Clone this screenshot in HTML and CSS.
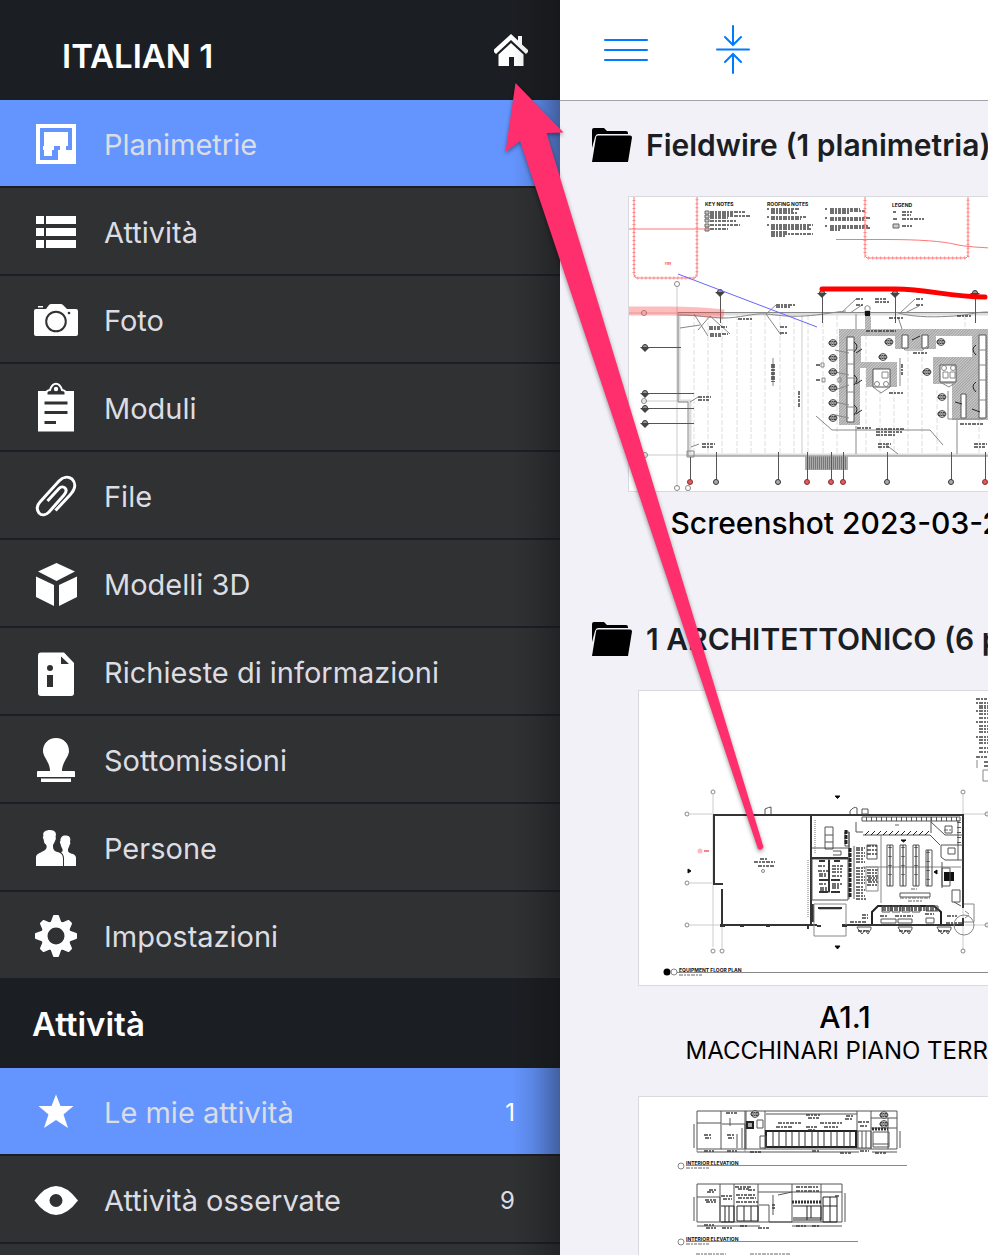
FILE: index.html
```html
<!DOCTYPE html>
<html lang="it">
<head>
  <meta charset="UTF-8" />
  <meta name="viewport" content="width=device-width, initial-scale=1.0"/>
  <title>Planimetrie</title>
  <link rel="stylesheet" href="styles.css">
</head>
<body>
  <div class="app">
    <aside class="sidebar">
      <header class="project">
        <h1>ITALIAN 1</h1>
        <button class="icon-btn" type="button" aria-label="Home">
          <svg class="home" viewBox="0 0 36 36">
            <path d="M1 17.500 18 2l7 6.500V4h4v8.500l6 5.500v2l-2 2L18 8 3 22l-2-2z" fill="#fff"/>
            <path d="M5.500 22.500 18 11l12.500 11.500V34H21v-9h-5v9H5.500z" fill="#fff"/>
          </svg>
        </button>
      </header>

      <nav>
        <a class="row active" href="#">
          <svg class="icon" viewBox="0 0 48 48">
            <path fill-rule="evenodd" d="M4 5h40v40H4zM8 9v32h18V31h2v-4h-6v4h-2v6h-8v-6h-1v-4h1V13h24v14h-2v4h6V9z"/>
          </svg>
          <span class="label">Planimetrie</span>
        </a>
        <a class="row" href="#">
          <svg class="icon" viewBox="0 0 48 48">
            <path d="M4 9h8v8H4zM14 9h30v8H14zM4 21h8v8H4zM14 21h30v8H14zM4 33h8v8H4zM14 33h30v8H14z"/>
          </svg>
          <span class="label">Attività</span>
        </a>
        <a class="row" href="#">
          <svg class="icon" viewBox="0 0 48 48">
            <path d="M6 11h5v1.500H6zM4 14h10l3-4q1-1 2-1h10q1 0 2 1l4 4h9q2 0 2 2v23q0 2-2 2H4q-2 0-2-2V16q0-2 2-2z"/>
            <circle class="cut-line" cx="24" cy="26.500" r="9.800"/>
            <circle class="cut" cx="37" cy="18" r="1.300"/>
          </svg>
          <span class="label">Foto</span>
        </a>
        <a class="row" href="#">
          <svg class="icon" viewBox="0 0 48 48">
            <path d="M6 8h36v40.500H6z"/>
            <path class="cut clip" d="M14.500 12.500v-3q0-2 3.500-2.500Q20 .8 24 .8T30 7q3.500.5 3.500 2.500v3z"/>
            <circle cx="24" cy="6" r="2.200"/>
            <path class="cut" d="M12.500 18.500h23v3h-23zM12.500 28h23v3h-23zM12.500 38H24v3H12.500z"/>
          </svg>
          <span class="label">Moduli</span>
        </a>
        <a class="row" href="#">
          <svg class="icon" viewBox="0 0 48 48">
            <path class="line" d="M23.500 39.500 38 24c7-7.500 5-13 2-16-4-3-9-2-13 2L8 31c-4 4-3 8-1 11 3 3 7 2 10-1l15-17c3-3.500 2-6 1-7-1.500-1.500-4-1.500-6 .5L15.500 30"/>
          </svg>
          <span class="label">File</span>
        </a>
        <a class="row" href="#">
          <svg class="icon" viewBox="0 0 48 48">
            <path d="M24.500 4 43 12.500 24.500 22 6 12.500zM4 17.500 22 26v21L4 38zM45 17.500 27 26v21l18-9z"/>
          </svg>
          <span class="label">Modelli 3D</span>
        </a>
        <a class="row" href="#">
          <svg class="icon" viewBox="0 0 48 48">
            <path d="M9 5.500h23L42 16v30q0 3-3 3H9q-3 0-3-3V8.500q0-3 3-3z"/>
            <path class="cut" d="M29 9.500V17h8zM15 28h6v12h-6z"/>
            <circle class="cut" cx="18" cy="21" r="3"/>
          </svg>
          <span class="label">Richieste di informazioni</span>
        </a>
        <a class="row" href="#">
          <svg class="icon" viewBox="0 0 48 48">
            <path d="M24 3c8 0 13 6 13 13 0 6-7 11-7 20h12q1 0 1 1v5H5v-5q0-1 1-1h12c0-9-7-14-7-20C11 9 16 3 24 3zM9 43.500h30V47H9z"/>
          </svg>
          <span class="label">Sottomissioni</span>
        </a>
        <a class="row" href="#">
          <svg class="icon" viewBox="0 0 48 48">
            <path d="M4 43V34c0-4 8-5 10-8 1-2 1-3-.5-5-1.500-1-1-1-2-5-1-1-.5-3 0-3C10 9 14 7 18 7c5 0 7 3 5.500 7 1 1 0 3-.5 4-1 3-2 3-2 5 0 6 3 5 7 7 2 1 3 3 3 6v7z"/>
            <path d="M32 43v-8c0-3-2-5-3-6 2 0 2-2 1-4-1-1-1-3-1.500-4-1-2-.5-3 0-3C28 14 31 12 34 12.500c4 0 5 3 4 6.500.5 1 .5 2-.5 3-.5 3-1.500 3-1.500 5 0 3 2 3 5 4 2 1 3 2 3 4v8z"/>
          </svg>
          <span class="label">Persone</span>
        </a>
        <a class="row" href="#">
          <svg class="icon" viewBox="0 0 48 48">
            <path d="M22 5h4l2.500 7h-9zM22 45h4l2.500-7h-9zM4 23v4l7 2.500v-9zM44 23v4l-7 2.500v-9z" class="tooth"/>
            <path d="M9 12.500 11.500 10l7 3-6.500 6.500zM39 12.500 36.500 10l-7 3 6.500 6.500zM9 37.500l2.500 2.500 7-3-6.500-6.500zM39 37.500 36.500 40l-7-3 6.500-6.500z" class="tooth"/>
            <circle cx="24" cy="25" r="15"/>
            <circle class="cut" cx="24" cy="25" r="8.500"/>
          </svg>
          <span class="label">Impostazioni</span>
        </a>
      </nav>

      <h2 class="group">Attività</h2>

      <nav>
        <a class="row active" href="#">
          <svg class="icon" viewBox="0 0 48 48">
            <path d="M24 7.500 28.500 19h13L31.500 27.500 36 41l-12-8-12 8 4.500-13.500L6.500 19h13z"/>
          </svg>
          <span class="label">Le mie attività</span>
          <span class="count">1</span>
        </a>
        <a class="row" href="#">
          <svg class="icon" viewBox="0 0 48 48">
            <path d="M2.500 25.500Q13 11 24 11t22 14.500Q35 40 24 40T2.500 25.500z"/>
            <circle class="cut" cx="24" cy="25.500" r="6.500"/>
          </svg>
          <span class="label">Attività osservate</span>
          <span class="count">9</span>
        </a>
      </nav>
    </aside>

    <main class="content">
      <div class="toolbar">
        <button class="icon-btn" type="button" aria-label="Menu">
          <svg class="tool" viewBox="0 0 50 50"><path d="M4 15h42M4 25h42M4 35h42"/></svg>
        </button>
        <button class="icon-btn" type="button" aria-label="Comprimi">
          <svg class="tool" viewBox="0 0 50 50"><path d="M9 24.500h32M25 1v19M17 12l8 8 8-8M25 48V29M17 37l8-8 8 8"/></svg>
        </button>
      </div>

      <section>
        <h2 class="folder">
          <svg class="folder-icon" viewBox="0 0 40 34">
            <path d="M0 20V2q0-2 2-2h10l3 3h19q2 0 2 2v1H6q-2 0-3 3z"/>
            <path d="M6 7.500h32q2 0 2 2L36 34H0L4 9.500q0-2 2-2z"/>
          </svg>
          Fieldwire (1 planimetria)
        </h2>
        <div class="sheets">
          <a class="sheet" href="#">
            <svg class="thumb wide" viewBox="628 196 434 296">
              <defs>
                <pattern id="hatch" width="2" height="2" patternUnits="userSpaceOnUse" patternTransform="rotate(45)">
                  <rect width="2" height="2" fill="#ccc"/><path d="M0 0v2" stroke="#777"/>
                </pattern>
                <g id="tag"><circle r="2.500" fill="#999" stroke="#333"/><path d="M-5 0H5L0 5z" fill="#444"/></g>
                <g id="bubble"><circle r="3.500" fill="#ccc" stroke="#555"/><path d="M-4-1.500h8M-5 0H5M-4 1.500h8" stroke="#444" stroke-dasharray="2 .5"/></g>
              </defs>

              <!-- dashed roof lines -->
              <path class="dash" d="M694 315v139M708 315v139M722 315v139M737 315v139M751 315v139M765 315v139M780 315v139M794 315v139M808 315v139M823 315v139M837 315v139M866 335v119M880 390v64M894 390v64M908 350v104M922 350v104M937 390v64M965 315v14M979 420v34"/>
              <path class="pale" d="M677 287v200M802 315v139M628 313h50M642 401h48M645 455h45"/>

              <!-- walls -->
              <path class="wall" d="M1060 314H679v87h11v54h370"/>
              <path class="thin" d="M1060 312.500H678v89.500h10v54h372M687 451h7v6h-7z"/>
              <path class="thin" d="M679 315c20 0 30 3 45 3s30-5 42-4 20 3 38 2 30-4 42-5M898 313c20 5 40 4 56 3s20-4 34-4M700 325l-20 3M698 330l12-14 20 18M708 336l-14-22M766 314l10-9M766 314l15 21M841 313l15-14M850 313l12-8M900 313l15-14M905 313l14-7M898 317l4 12M856 314v16"/>
              <path class="ink" d="M720.500 292v31M822.500 292v31M895.500 292v31M975.500 292v31M648 347.500h33M648 393.500h46M648 408.500h46M648 423.500h46"/>
              <use href="#tag" x="720" y="292"/><use href="#tag" x="822" y="293"/><use href="#tag" x="895" y="293"/><use href="#tag" x="975" y="293"/>
              <use href="#tag" x="645" y="347"/><use href="#tag" x="645" y="393"/><use href="#tag" x="645" y="408"/><use href="#tag" x="645" y="423"/>
              <g class="thin"><circle cx="677" cy="284" r="2.500"/><circle cx="644" cy="313" r="2.500"/><circle cx="644" cy="401" r="2.500"/><circle cx="645" cy="455" r="2.500"/><circle cx="677" cy="488" r="2.500"/><circle cx="688" cy="488" r="2.500"/></g>

              <!-- roof equipment -->
              <path fill="url(#hatch)" d="M839 329h221v7H936v13H895v-13H861v26h36v25h-31v-19h-6v57h-21zM865 316h6v14h-6zM933 357h39v-21h20v84h-40v-36h-19z"/>
              <path d="M847 337h7v85h-7zM873 369h17v18h-17zM940 365h16v17h-16zM902 335h6v13h-6zM922 335h6v13h-6zM961 394h5v24h-5zM979 335h7v83h-7z" fill="#fff" stroke="#555"/>
              <path class="thin" d="M873 387l8 6 9-6M940 382l9 5 7-5M882 372h6v6h-6zM943 372h5v6h-5zM950 372h5v6h-5zM865 311h5v4h-5zM847 350h7M847 364h7M847 378h7M847 392h7M847 407h7M979 350h7M979 365h7M979 380h7M979 400h7M901 346l4 4h18l4-4M835 350l14 3M835 372l14 3M835 390l14-5M835 402l14 3M835 415l14 3"/>
              <circle class="thin" cx="877" cy="384" r="2.500"/><circle class="thin" cx="886" cy="384" r="2.500"/><circle class="thin" cx="944" cy="368" r="2.500"/><circle class="thin" cx="953" cy="368" r="2.500"/>
              <path d="M865 311h5v5h-5z" fill="#111"/><path class="thin" d="M865 310v-3q2-3 5 0v3M821 363h3v4h-3zM822 378h3v4h-3zM838 378h3v4h-3zM773 358v28M900 358v28M948 391v28h36"/>
              <use href="#bubble" x="833" y="343"/><use href="#bubble" x="833" y="358"/><use href="#bubble" x="833" y="372"/><use href="#bubble" x="833" y="388"/><use href="#bubble" x="833" y="403"/><use href="#bubble" x="833" y="418"/>
              <use href="#bubble" x="889" y="342"/><use href="#bubble" x="941" y="342"/><use href="#bubble" x="883" y="357"/><use href="#bubble" x="927" y="372"/><use href="#bubble" x="942" y="397"/><use href="#bubble" x="942" y="414"/>
              <path class="curl" d="M854 342q6 4 0 10M854 375q6 4 0 10M854 405q6 4 0 10M862 349l-6 4M862 380l-6 4M862 410l-6 4M976 345q-6 4 0 10M976 382q-6 4 0 10M912 340l8-4M955 402l7 2M972 409l8 3"/>
              <path class="thin" d="M816 416l16 14h98l13 15M856 426v28M957 420v34M885 444l13 10M690 402l8-5M691 447l8-3"/>
              <path class="note heavy" d="M776 305h20M776 307h14M709 327h18M709 329h12M710 334h18M710 336h12M780 327h8M780 333h8M738 319h14M856 299h7M856 305h7M916 299h7M916 305h7M875 299h12M875 302h14M889 318h14M957 316h14M866 331h30M698 397h13M698 400h11M702 444h13M702 447h11M876 429h28M876 432h26M876 435h20M878 444h13M878 447h11M974 444h13M974 447h11M857 428h14M889 393h14M913 353h14M960 424h24M772 364v18M774 364v18M799 391v17M902 364v12M816 365h4M816 380h4"/>

              <!-- lower edge -->
              <path d="M805 456h43v14h-43z" fill="#aaa"/><path d="M807 463h40" stroke="#777" stroke-width="13" stroke-dasharray="1 1"/>
              <path class="ink" d="M690.500 457v23M716.500 452v28M778.500 452v28M807.500 452v28M831.500 452v28M843.500 452v28M887.500 452v28M951.500 452v28M985.500 452v28"/>
              <g fill="#aaa" stroke="#333"><circle cx="716" cy="482" r="2.500"/><circle cx="778" cy="482" r="2.500"/><circle cx="887" cy="482" r="2.500"/><circle cx="951" cy="482" r="2.500"/></g>
              <g fill="#e55" stroke="#733"><circle cx="690" cy="482" r="2.500"/><circle cx="807" cy="482" r="2.500"/><circle cx="831" cy="482" r="2.500"/><circle cx="843" cy="482" r="2.500"/><circle cx="985" cy="482" r="2.500"/></g>

              <!-- notes -->
              <g class="plan-title"><text x="705" y="206">KEY NOTES</text><text x="767" y="206">ROOFING NOTES</text><text x="892" y="207">LEGEND</text></g>
              <path class="note heavy" d="M710 212h36M710 214h24M710 216h40M710 218h18M710 221h26M710 225h30M710 229h18M771 209h28M771 211h22M771 213h26M771 217h36M771 219h30M771 225h42M771 227h38M771 229h40M771 232h16M771 234h42M771 236h14M830 209h30M830 211h36M830 213h20M830 218h40M830 220h34M830 226h38M830 228h40M830 230h10M902 212h10M902 215h9M902 219h22M902 226h10M767 209h2M767 217h2M767 225h2M825 209h2M825 218h2M825 226h2M893 212h3M893 219h4"/>
              <path class="swatch" d="M705 211h4v3h-4zM705 215h4v3h-4zM705 219h4v3h-4zM705 224h4v3h-4zM705 228h4v3h-4zM893 224h6v4h-6z"/>

              <!-- markup -->
              <path class="cloud" d="M634 196v79l2 3h59l2-3v-79M865 196v60l2 2h99l2-2v-60"/>
              <path class="scallop" d="M634 196v79l2 3h59l2-3v-79M865 196v60l2 2h99l2-2v-60"/>
              <path d="M628 229h82M836 239.500h50q50 0 70 5 12 3 50 4" fill="none" stroke="#f77"/>
              <text class="plan-title red" x="665" y="265">FIRE</text>
              <path d="M628 311h40q30 0 56 3" fill="none" stroke="#f33" stroke-opacity=".33" stroke-width="9"/>
              <path d="M678 274l139 53" stroke="#66f"/>
              <path d="M822 289h73c35 0 52 8 90 8" fill="none" stroke="#f00" stroke-width="5" stroke-linecap="round"/>
            </svg>
            <span class="name">Screenshot 2023-03-23</span>
          </a>
        </div>
      </section>

      <section>
        <h2 class="folder">
          <svg class="folder-icon" viewBox="0 0 40 34">
            <path d="M0 20V2q0-2 2-2h10l3 3h19q2 0 2 2v1H6q-2 0-3 3z"/>
            <path d="M6 7.500h32q2 0 2 2L36 34H0L4 9.500q0-2 2-2z"/>
          </svg>
          1 ARCHITETTONICO (6 planimetrie)
        </h2>
        <div class="sheets">
          <a class="sheet" href="#">
            <svg class="thumb" viewBox="638 690 414 296">
              <!-- grid lines -->
              <path class="pale" d="M713 795v152M963 795v155M690 814h22M690 883h22M690 925h30M722 890v58M963 814h90M965 925h90"/>
              <g class="thin"><circle cx="713" cy="792" r="2"/><circle cx="963" cy="792" r="2"/><circle cx="687" cy="814" r="2"/><circle cx="687" cy="883" r="2"/><circle cx="687" cy="925" r="2"/><circle cx="713" cy="951" r="2"/><circle cx="722" cy="951" r="2"/><circle cx="963" cy="951" r="2"/><circle cx="987" cy="814" r="2"/><circle cx="987" cy="925" r="2"/></g>
              <path d="M835 796h5l-2.500 2.500zM835 946h5l-2.500 3zM688 869l3 2-3 2zM901 840h5l-2.500 2zM934 872l3-2v4z" stroke="#111"/>

              <!-- outer walls -->
              <path class="outer" d="M963 815H714v69h9M722 889v36h95M842 925h122M963 814v94M963 918v8"/>
              <path class="outer" d="M811 815v110M722 925h-2M813 904v18"/>
              <path d="M765 814v-5q4-2 6-2v7M850 814v-3q4-5 7-3v6M862 809h6v5h-6z" class="ink"/>
              <path class="thin" d="M814 904h32v32h-32zM819 909h22"/><path d="M818 908h24" stroke="#333" stroke-width="2"/>

              <!-- restrooms -->
              <path class="ink" d="M812 859h36v41h-36zM829 859v34M849 846v53M854 846v53"/>
              <path class="outer" d="M819 861h6M834 861h6M819 892h9M831 892h9M812 858h36M819 880h9M831 880h9M829 860v32"/>
              <path class="note heavy" d="M818 866h8M818 871h10M832 866h12M832 869h10M832 872h10M819 874h8M819 876h8M832 876h10M819 884h8M832 884h10M820 888h7M832 888h8M820 890h7M832 886h8"/>
              <path class="ink" d="M825 827h8v22h-8zM825 835h8M825 842h8M845 832h4v14h-4zM812 848h36M833 851h8v4h-8M849 832v27"/>
              <path d="M846 830v15M850 848v50" stroke="#222" stroke-width="3" stroke-dasharray="4 1"/>
              <path d="M815 820v34M808 860v58" stroke="#777" stroke-width="1" stroke-dasharray="1 1"/>

              <!-- storage and coolers -->
              <path class="ink" d="M862 817h98v4h-98zM863 835h67l10 10M931 817v16M931 822l14 13h18M941 845h22M941 845v12l4 3h18M958 820v40M856 822v10h7M867 845h10v14h-10z"/>
              <path d="M866 819h92M959 822v24" fill="none" stroke="#555" stroke-width="4" stroke-dasharray="1 4"/>
              <path class="slash" d="M865 835l4-4M871 835l4-4M877 835l4-4M883 835l4-4M889 835l4-4M895 835l4-4M901 835l4-4M907 835l4-4M913 835l4-4M919 835l4-4M925 835l4-4"/>
              <path class="note heavy" d="M856 848h9M856 850h8M856 853h9M856 856h9M856 859h8M856 862h9M856 868h9M856 871h9M856 874h8M856 877h9M856 880h9M856 883h9M856 887h8M856 890h9M856 893h7M856 896h9M856 899h10M867 846h10M867 850h10M867 854h10M867 870h11M867 873h10M867 876h11M867 880h10M867 885h10M868 878h10M868 882h10"/>
              <path class="thin" d="M881 835v68M863 867h98M866 867h12v24h-12z"/>
              <path class="shelf" d="M890 847v36M903 847v36M916 847v36M928 852v31"/>
              <path class="ink" d="M887 845h6v41h-6zM900 845h6v41h-6zM913 845h6v41h-6zM926 850h6v36h-6zM900 893h30v4h-30zM945 826h7v7h-7zM948 848h7v6h-7z"/>
              <path d="M890 845v41M903 845v41M916 845v41M928 850v36" stroke="#222"/>
              <path class="note" d="M900 898h30M908 901h14M911 889h6M895 825h5M944 830h8"/>
              <path d="M944 872h10v9h-10z" fill="#111"/><path class="ink" d="M942 868h8v18h-8zM952 890h8v12h-8zM954 902l7 4M942 862v26"/>

              <!-- counter -->
              <path d="M872 924v-12l6-6h56l7 6v12" fill="none" stroke="#222" stroke-width="2"/>
              <path class="ink" d="M882 906h8v6h-8zM892 906h8v6h-8zM902 906h8v6h-8zM912 906h8v6h-8zM926 906h12v5h-12zM881 919h15v4h-15zM898 919h14v4h-14zM926 918h8v5h-8z"/>
              <path class="note heavy" d="M882 908h56M882 910h56M850 922h16M862 915h6M862 918h6M880 916h8M895 916h18M925 914h9M947 916h10M946 923h16"/>
              <path class="ink" d="M857 927h14v2l-3 5-3-4-3 4-4-5zM898 927h14v2l-3 5-3-4-3 4-4-5zM937 927h14v2l-3 5-3-4-3 4-4-5z"/>
              <path class="note heavy" d="M858 931h12M899 931h12M938 931h12"/>
              <circle class="thin" cx="964" cy="925" r="10"/><path class="thin" d="M964 904h10v18h-10M965 911l4 3M965 918l4-3"/>
              <path d="M740 926h4M766 926h4M720 926h5M800 925h8v4M817 926h4M842 926h5" class="outer"/>

              <!-- labels -->
              <path class="note heavy" d="M760 859h8M754 862h21M758 866h16M976 699h30M979 703h20M979 706h20M979 708h20M979 711h20M979 714h20M979 718h20M979 722h20M979 726h20M979 729h20M979 732h20M979 737h20M979 740h20M979 743h20M979 748h20M979 752h20M976 757h20M984 762h20M984 766h20M976 703h2M976 711h2M976 722h2M976 737h2"/>
              <circle class="thin" cx="763" cy="871" r="1.500"/><path class="thin" d="M983 770h30v11h-30zM977 760v8"/>
              <circle cx="700" cy="851" r="2.500" fill="#fbb"/><path d="M704 851h5" stroke="#e88" stroke-width="2"/>
              <circle cx="667" cy="972" r="3.500"/><circle class="thin" cx="674" cy="972" r="3"/>
              <g class="plan-title"><text x="679" y="972">EQUIPMENT FLOOR PLAN</text></g>
              <path class="note" d="M679 975h24"/><path class="thin" d="M677 972.500h380"/>
            </svg>
            <span class="name">A1.1</span>
            <span class="desc">MACCHINARI PIANO TERRA</span>
          </a>
          <a class="sheet" href="#">
            <svg class="thumb" viewBox="638 1096 414 296">
              <!-- upper elevation -->
              <path class="ink" d="M697 1111h200v38H697zM697 1123h24M721 1111v38M745 1111v38M722 1124h23v25M746 1111v38M765 1111v38M766 1114h91M857 1111v38M871 1111v38M871 1118h26M871 1128h26M765 1131h93M888 1118v31M697 1152h68M765 1152h94M872 1152h25M900 1131v17M694 1124v24M730 1118v8M737 1134v14M742 1128v20"/>
              <path d="M766 1131h90v16h-90z" fill="#fff" stroke="#222" stroke-width="2"/>
              <path d="M773 1131v16M779 1131v16M786 1131v16M792 1131v16M799 1131v16M805 1131v16M812 1131v16M818 1131v16M824 1131v16M831 1131v16M837 1131v16M844 1131v16M850 1131v16" stroke="#333"/>
              <path d="M858 1131h13v17h-13zM862 1131v17M866 1131v17M873 1132h16v15h-16zM873 1144h16M757 1120h6v8h-6zM760 1136h6v12h-6z" class="ink"/>
              <path d="M747 1122h6v6h-6z" fill="#aaa" stroke="#222" stroke-width="2"/>
              <path d="M872 1129h16" stroke="#333" stroke-width="3" stroke-dasharray="2 1"/>
              <use href="#bubble" x="755" y="1114"/><use href="#bubble" x="884" y="1115"/><use href="#bubble" x="884" y="1124"/>
              <path class="note heavy" d="M704 1135h8M705 1138h6M727 1135h8M728 1138h6M778 1123h24M806 1115h14M808 1118h12M820 1123h22M776 1127h16M806 1127h12M824 1127h14M808 1130h8M845 1119h8M858 1122h12M860 1126h8M846 1116h8M704 1151h10M727 1151h10M750 1152h12M812 1151h8M840 1153h12M860 1151h9M875 1153h12M726 1113h12"/>
              <path class="thin" d="M686 1165.500h221M697 1149v3M745 1149v3"/><circle class="thin" cx="681" cy="1166" r="3"/>
              <g class="plan-title"><text x="686" y="1165">INTERIOR ELEVATION</text></g>
              <path class="note" d="M686 1168h23"/>

              <!-- lower elevation -->
              <path class="ink" d="M697 1184h145v38H697zM697 1197h23v25M720 1184v38M734 1184v38M758 1184v38M792 1184v38M821 1184v38M758 1192h84M845 1193v29M694 1197v24M697 1226h63M792 1226h50M759 1205h10v17M773 1195v20M769 1222h23M778 1195l14-3"/>
              <path d="M721 1206h13v16h-13M725 1206v16M729 1206v16M737 1206h21v15h-21zM744 1206v15M751 1206v15M793 1206h28v14h-28M807 1206v14M811 1206v12M823 1197h14v25h-14zM830 1197v25M823 1206h14M793 1218h28" fill="none" stroke="#222"/>
              <path d="M792 1202h29" stroke="#333" stroke-width="3" stroke-dasharray="2 1"/>
              <path class="note heavy" d="M709 1190h8M707 1192h8M705 1200h12M706 1202h10M721 1196h12M723 1199h9M735 1187h16M738 1189h12M736 1195h20M738 1198h18M736 1202h22M748 1190h8M796 1187h22M796 1191h24M835 1196h5M772 1205h3M772 1208h3M704 1225h10M722 1228h10M706 1228h10M740 1226h8M758 1228h12M796 1226h10M812 1226h8"/>
              <path class="thin" d="M686 1241.500h172"/><circle class="thin" cx="681" cy="1242" r="3"/>
              <g class="plan-title"><text x="686" y="1241">INTERIOR ELEVATION</text></g>
              <path class="note" d="M686 1244h23M696 1254h30M750 1254h40"/>
            </svg>
          </a>
        </div>
      </section>
    </main>

    <!-- pointer to the home button -->
    <svg class="pointer" viewBox="500 80 268 774">
      <path d="M515.500 83 563.500 132.500 546.500 133 763.500 847Q762 851 758 849L520 141 505.500 152z"/>
    </svg>
  </div>
</body>
</html>
```
FILE: styles.css
```css
* {
  box-sizing: border-box;
}
body {
  margin: 0;
  font-family: Inter, "Liberation Sans", sans-serif;
  background: #f2f1f7;
  color: #1b1e22;
}
h1, h2 {
  margin: 0;
  font-size: 30px;
  font-weight: 600;
}
a {
  color: inherit;
  text-decoration: none;
}
.app {
  position: relative;
  display: flex;
  height: 100vh;
  overflow: hidden;
}
.icon-btn {
  padding: 0;
  border: none;
  background: none;
  cursor: pointer;
}
.icon-btn svg {
  display: block;
}

/* sidebar */
.sidebar {
  position: relative;
  flex: 0 0 560px;
  background: #303133;
  color: #dcdde2;
}
.sidebar::after {
  content: "";
  position: absolute;
  inset: 0 0 0 auto;
  width: 48px;
  background: linear-gradient(to right, transparent, rgba(15, 15, 15, 0.12) 45%, rgba(15, 15, 15, 0.4));
  pointer-events: none;
}
.project {
  display: flex;
  align-items: center;
  justify-content: space-between;
  height: 100px;
  padding: 0 31px 0 62px;
  background: #1b1e22;
  color: #fff;
}
.project h1 {
  padding-top: 12px;
  font-size: 33px;
}
.home {
  width: 36px;
  height: 36px;
}
.row {
  display: flex;
  align-items: center;
  gap: 24px;
  height: 88px;
  padding: 0 45px 0 32px;
  border-bottom: 2px solid #1c1e26;
  font-size: 29px;
}
.row.active {
  background: #6495ff;
}
.icon {
  width: 48px;
  height: 48px;
  overflow: visible;
  fill: #fff;
}
.icon .cut {
  fill: #303133;
}
.icon .clip {
  stroke: #fff;
  stroke-width: 2;
}
.icon .cut-line {
  fill: none;
  stroke: #303133;
  stroke-width: 2;
}
.icon .line {
  fill: none;
  stroke: #fff;
  stroke-width: 3;
}
.icon .tooth {
  stroke: #fff;
  stroke-width: 2;
  stroke-linejoin: round;
}
.label {
  flex: 1;
  padding-top: 2px;
}
.count {
  padding-top: 2px;
  font-size: 24px;
}
.active .count {
  color: #fff;
}
.group {
  height: 88px;
  padding-left: 32px;
  background: #1b1e22;
  color: #fff;
  font-size: 33px;
  line-height: 88px;
}

/* sheets */
.content {
  flex: 1;
  min-width: 0;
  overflow: hidden;
}
.toolbar {
  display: flex;
  align-items: center;
  gap: 57px;
  height: 101px;
  padding-left: 41px;
  background: #fff;
  border-bottom: 1px solid #a3a3aa;
}
.tool {
  width: 50px;
  height: 50px;
  fill: none;
  stroke: #007aff;
  stroke-width: 2;
  stroke-linecap: round;
}
.folder {
  display: flex;
  align-items: center;
  gap: 14px;
  height: 88px;
  margin-bottom: 7px;
  padding-left: 32px;
  white-space: nowrap;
}
.folder-icon {
  flex: none;
  width: 40px;
  height: 34px;
}
.sheets {
  display: flex;
  flex-direction: column;
  gap: 30px;
  padding: 0 0 23px 68px;
}
.sheet {
  display: flex;
  flex-direction: column;
  align-items: center;
  width: 434px;
  min-height: 376px;
  color: #000;
}
.thumb {
  width: 414px;
  height: 296px;
  background: #fff;
  outline: 1px solid #d9d9de;
  outline-offset: -1px;
}
.thumb.wide {
  width: 434px;
}
.name {
  margin-top: 13px;
  font-size: 30px;
  font-weight: 500;
  line-height: 36px;
}
.desc {
  font-size: 24px;
  line-height: 31px;
}

/* plan drawings */
.thin, .ink, .outer, .wall, .pale, .dash, .curl, .slash, .cloud, .scallop, .shelf, .swatch {
  fill: none;
  stroke-width: 1;
}
.thin {
  stroke: #888;
}
.ink {
  stroke: #555;
}
.outer {
  stroke: #333;
  stroke-width: 2;
}
.wall {
  stroke: #ddd;
  stroke-width: 3;
}
.pale {
  stroke: #ccc;
}
.dash {
  stroke: #dedede;
  stroke-dasharray: 5 2;
}
.curl, .slash {
  stroke: #222;
}
.shelf {
  stroke: #888;
  stroke-width: 4;
  stroke-dasharray: 1 8;
}
.swatch {
  stroke: #666;
  fill: #ccc;
}
.note {
  fill: none;
  stroke: #666;
  stroke-width: 1;
  stroke-dasharray: 4 1 2 1 3 1;
}
.note.heavy {
  stroke: #333;
  stroke-width: 2;
  stroke-opacity: 0.7;
}
.cloud {
  stroke: #f77;
}
.scallop {
  stroke: #f88;
  stroke-width: 3;
  stroke-dasharray: 1 3;
}
.plan-title {
  font-size: 5px;
  font-weight: 700;
  fill: #111;
}
.plan-title.red {
  fill: #f44;
  font-size: 3px;
}

.pointer {
  position: absolute;
  top: 80px;
  left: 500px;
  width: 268px;
  height: 774px;
  fill: #ff2f6e;
  filter: drop-shadow(0 2px 2px rgba(0, 0, 0, 0.4));
  pointer-events: none;
}
```
